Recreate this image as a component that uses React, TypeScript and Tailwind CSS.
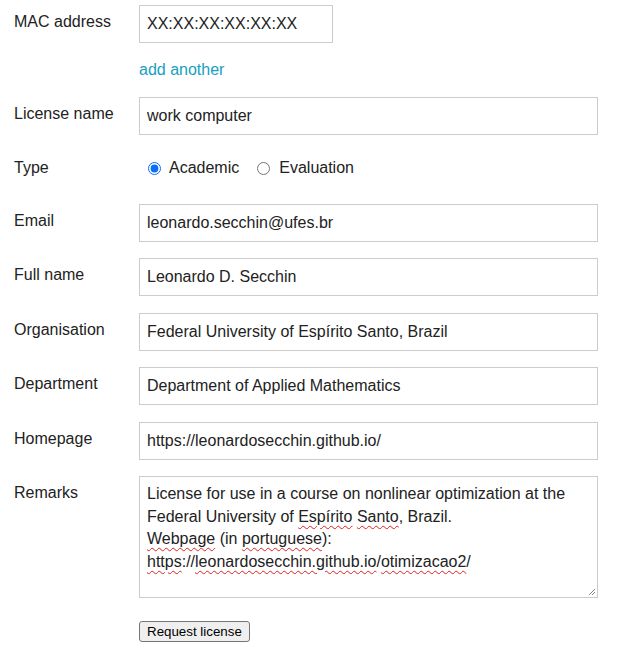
const font = { fontFamily: '"Liberation Sans", Arial, sans-serif' };

const Field = ({ label, value, top }: { label: string; value: string; top: string }) => (
  <div className={`flex ${top}`}>
    <label className="w-[125px] shrink-0 pt-[5px] leading-6">{label}</label>
    <input
      readOnly
      value={value}
      className="h-[38px] flex-1 border border-[#cccccc] bg-white px-[7px] text-[16px] text-[#222] outline-none"
      style={font}
    />
  </div>
);

const Wavy = ({ children }: { children: React.ReactNode }) => (
  <span className="underline decoration-wavy decoration-[#e02020] decoration-1 underline-offset-[3px]">
    {children}
  </span>
);

export default function App() {
  return (
    <div className="min-h-screen bg-white pl-[14px] pr-[19px] pt-[5px] text-[16px] text-[#222]" style={font}>
      <div className="flex">
        <label className="w-[125px] shrink-0 pt-[5px] leading-6">MAC address</label>
        <input
          readOnly
          value="XX:XX:XX:XX:XX:XX"
          className="h-[38px] w-[194px] border border-[#cccccc] bg-white px-[7px] text-[16px] text-[#222] outline-none"
          style={font}
        />
      </div>
      <div className="mt-[15px] flex">
        <div className="w-[125px] shrink-0" />
        <a href="#" className="leading-6 text-[#179fc0]">
          add another
        </a>
      </div>

      <Field label="License name" value="work computer" top="mt-[15px]" />

      <div className="mt-[21px] flex items-center leading-6">
        <label className="w-[125px] shrink-0">Type</label>
        <label className="flex items-center">
          <input type="radio" name="type" defaultChecked className="m-0 ml-[9px] h-[13px] w-[13px] accent-[#0b6ef5]" />
          <span className="ml-[8px]">Academic</span>
        </label>
        <label className="ml-[18px] flex items-center">
          <input type="radio" name="type" className="m-0 h-[13px] w-[13px]" />
          <span className="ml-[9px]">Evaluation</span>
        </label>
      </div>

      <Field label="Email" value="leonardo.secchin@ufes.br" top="mt-[24px]" />
      <Field label="Full name" value="Leonardo D. Secchin" top="mt-[16px]" />
      <Field label="Organisation" value="Federal University of Espírito Santo, Brazil" top="mt-[17px]" />
      <Field label="Department" value="Department of Applied Mathematics" top="mt-[16px]" />
      <Field label="Homepage" value="https://leonardosecchin.github.io/" top="mt-[17px]" />

      <div className="mt-[16px] flex">
        <label className="w-[125px] shrink-0 pt-[5px] leading-6">Remarks</label>
        <div className="relative h-[122px] flex-1 border border-[#cccccc] bg-white px-[7px] pt-[6px] leading-[22.5px]">
          <div>
            License for use in a course on nonlinear optimization at the Federal University of <Wavy>Espírito</Wavy>{" "}
            <Wavy>Santo</Wavy>, Brazil.
          </div>
          <div>
            <Wavy>Webpage</Wavy> (in <Wavy>portuguese</Wavy>):
          </div>
          <div>
            <Wavy>https</Wavy>://<Wavy>leonardosecchin.github.io</Wavy>/<Wavy>otimizacao2</Wavy>/
          </div>
          <svg className="absolute bottom-[1px] right-[1px]" width="9" height="9" viewBox="0 0 9 9">
            <path d="M8 2 L2 8 M8 5 L5 8" stroke="#888" strokeWidth="1" />
          </svg>
        </div>
      </div>

      <div className="mt-[23px] flex">
        <div className="w-[125px] shrink-0" />
        <button
          className="h-[21px] rounded-[3px] border border-[#767676] bg-[#efefef] px-[7px] text-[13.33px] leading-[19px] text-black"
          style={font}
        >
          Request license
        </button>
      </div>
    </div>
  );
}
